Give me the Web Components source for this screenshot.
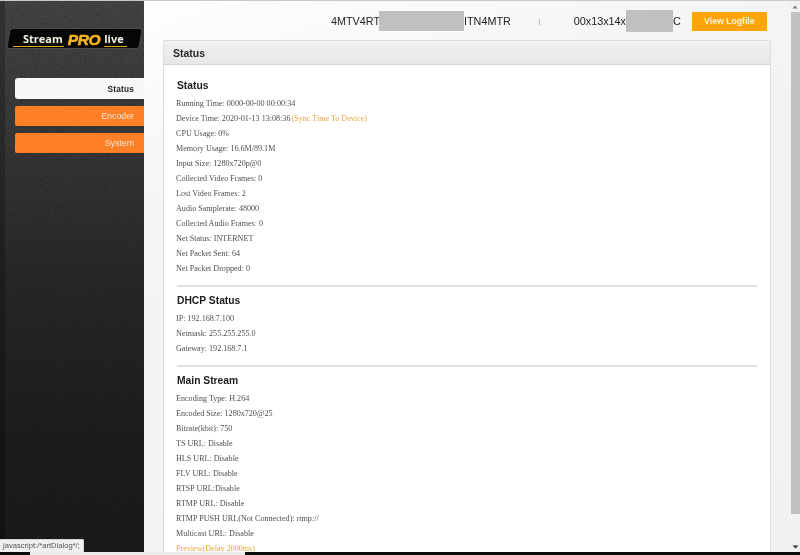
<!DOCTYPE html>
<html>
<head>
<meta charset="utf-8">
<title>Stream PRO live</title>
<style>
html, body { margin: 0; padding: 0; height: 555px; overflow: hidden; background: #000; }
</style>
</head>
<body>
<app-shell>
    <side-bar slot="side">
        <stream-logo></stream-logo>
        <nav-item active>Status</nav-item>
        <nav-item>Encoder</nav-item>
        <nav-item>System</nav-item>
    </side-bar>
    <top-bar slot="top"></top-bar>
    <status-card slot="main" title="Status">
        <info-section heading="Status">
            <info-line>Running Time: 0000-00-00 00:00:34</info-line>
            <info-line>Device Time: 2020-01-13 13:08:36<info-link style="margin-left:-1px">(Sync Time To Device)</info-link></info-line>
            <info-line>CPU Usage: 0%</info-line>
            <info-line>Memory Usage: 16.6M/89.1M</info-line>
            <info-line>Input Size: 1280x720p@0</info-line>
            <info-line>Collected Video Frames: 0</info-line>
            <info-line>Lost Video Frames: 2</info-line>
            <info-line>Audio Samplerate: 48000</info-line>
            <info-line>Collected Audio Frames: 0</info-line>
            <info-line>Net Status: INTERNET</info-line>
            <info-line>Net Packet Sent: 64</info-line>
            <info-line>Net Packet Dropped: 0</info-line>
        </info-section>
        <info-section heading="DHCP Status">
            <info-line>IP: 192.168.7.100</info-line>
            <info-line>Netmask: 255.255.255.0</info-line>
            <info-line>Gateway: 192.168.7.1</info-line>
        </info-section>
        <info-section heading="Main Stream" last>
            <info-line>Encoding Type: H.264</info-line>
            <info-line>Encoded Size: 1280x720@25</info-line>
            <info-line>Bitrate(kbit): 750</info-line>
            <info-line>TS URL: Disable</info-line>
            <info-line>HLS URL: Disable</info-line>
            <info-line>FLV URL: Disable</info-line>
            <info-line>RTSP URL:Disable</info-line>
            <info-line>RTMP URL: Disable</info-line>
            <info-line>RTMP PUSH URL(Not Connected): rtmp://</info-line>
            <info-line>Multicast URL: Disable</info-line>
            <info-line><info-link>Preview(Delay 2000ms)</info-link></info-line>
        </info-section>
    </status-card>
    <fake-scrollbar slot="scroll"></fake-scrollbar>
    <link-tip slot="tip">javascript:/*artDialog*/;</link-tip>
</app-shell>

<script>
class AppShell extends HTMLElement {
    constructor() {
        super();
        this.attachShadow({ mode: 'open' });
        this.shadowRoot.innerHTML = `
            <style>
                :host { display: block; position: relative; width: 800px; height: 555px; overflow: hidden; }
                /* opacity keeps the text greyscale like the reference */
                .frame { display: flex; height: 552px; border-top: 1px solid #c9c9c9; box-sizing: border-box; opacity: .999; }
                .content { flex: 1; min-width: 0; display: flex; flex-direction: column; overflow: hidden;
                    background: linear-gradient(160deg, #fefefe 0%, #f4f4f4 30%, #f1f1f1 100%); }
                .strip { height: 3px; background: #0c0c0c; padding-left: 30px; }
                .strip div { width: 215px; height: 3px; background: #ececec; }
            </style>
            <div class="frame">
                <slot name="side"></slot>
                <div class="content">
                    <slot name="top"></slot>
                    <slot name="main"></slot>
                </div>
                <slot name="scroll"></slot>
            </div>
            <div class="strip"><div></div></div>
            <slot name="tip"></slot>
        `;
    }
}

class SideBar extends HTMLElement {
    constructor() {
        super();
        this.attachShadow({ mode: 'open' });
        this.shadowRoot.innerHTML = `
            <style>
                :host {
                    display: flex; flex-direction: column; flex: none; width: 144px; box-sizing: border-box;
                    position: relative; overflow: hidden;
                    padding: 27px 0 0 15px; gap: 7px;
                    background: linear-gradient(180deg, #494949 0%, #3b3b3b 25%, #2b2b2b 50%, #1f1f1f 80%, #1c1c1c 100%);
                }
                /* grain over the gradient, the band on the left is just darker */
                .grain { position: absolute; left: 0; top: 0; width: 144px; height: 552px; opacity: .3; }
                .band { position: absolute; left: 0; top: 0; width: 5px; height: 100%; background: rgba(0,0,0,.22); }
                ::slotted(*) { z-index: 1; }
            </style>
            <svg class="grain" aria-hidden="true">
                <filter id="noise">
                    <feTurbulence type="fractalNoise" baseFrequency="0.9" numOctaves="2" seed="4"/>
                    <feColorMatrix values="0 0 0 0 0  0 0 0 0 0  0 0 0 0 0  0 0 0 1.6 -0.45"/>
                </filter>
                <rect width="144" height="552" filter="url(#noise)"/>
            </svg>
            <div class="band"></div>
            <slot></slot>
        `;
    }
}

class StreamLogo extends HTMLElement {
    constructor() {
        super();
        this.attachShadow({ mode: 'open' });
        this.shadowRoot.innerHTML = `
            <style>
                :host { display: flex; align-items: center; position: relative; width: 133px; height: 21px;
                    margin: 0 0 22px -7px; box-sizing: border-box; font-family: "Open Sans", "Liberation Sans", sans-serif;
                    color: #f4f1e6; font-size: 11px; font-weight: 700; line-height: 1; }
                .bg { position: absolute; inset: 0; transform: skewX(-10deg); background: #060606;
                    border: 1px solid #4a4a4a; border-radius: 3px; }
                .row { position: relative; display: flex; align-items: flex-end; padding-left: 5px; height: 17px; }
                .word { border-bottom: 1px solid #e6a825; padding: 0 3px 2px 0; }
                .word.first { padding-left: 10px; padding-right: 1px; }
                .pro { font-family: "Liberation Sans", sans-serif; font-style: italic; font-weight: 700; font-size: 15.5px;
                    color: #f6b21f; letter-spacing: -.4px; margin: 0 4px; -webkit-text-stroke: .6px #f6b21f; }
            </style>
            <div class="bg"></div>
            <div class="row">
                <span class="word first">Stream</span>
                <span class="pro">PRO</span>
                <span class="word">live</span>
            </div>
        `;
    }
}

class NavItem extends HTMLElement {
    constructor() {
        super();
        this.attachShadow({ mode: 'open' });
        this.shadowRoot.innerHTML = `
            <style>
                :host { display: flex; align-items: center; justify-content: flex-end; height: 20px; padding-right: 10px;
                    border-radius: 2px 0 0 2px; background: #fd7f26; color: #fbe6d6;
                    font: 400 8.8px "Liberation Sans", Arial, sans-serif; }
                :host([active]) { height: 21px; background: #f8f8f8; color: #222; font-weight: 700; font-size: 8.3px; border-radius: 3px 0 0 3px; letter-spacing: .2px; }
            </style>
            <slot></slot>
        `;
    }
}

class TopBar extends HTMLElement {
    constructor() {
        super();
        this.attachShadow({ mode: 'open' });
        this.shadowRoot.innerHTML = `
            <style>
                :host { display: flex; align-items: center; flex: none; height: 39px; padding-left: 187px;
                    box-sizing: border-box; font: 400 10.8px "Liberation Sans", Arial, sans-serif; color: #222; }
                .cover { display: inline-block; background: #c0c0c0; flex: none; }
                .sep { width: 1px; height: 6px; background: #bbb; margin: 3px 34px 0 28px; flex: none; }
                button { flex: none; width: 75px; height: 19px; margin: 1px 0 0 11px; border: 0; padding: 0; border-radius: 0;
                    background: #ffa40a; color: #fff3df; font: 700 8.7px "Liberation Sans", Arial, sans-serif; }
            </style>
            <span>4MTV4RT</span><span class="cover" style="width:85px;height:20px;margin-left:-1px"></span><span>ITN4MTR</span>
            <span class="sep"></span>
            <span>00x13x14x</span><span class="cover" style="width:47px;height:22px"></span><span>C</span>
            <button>View Logfile</button>
        `;
    }
}

class StatusCard extends HTMLElement {
    constructor() {
        super();
        this.attachShadow({ mode: 'open' });
        const title = this.getAttribute('title') || '';
        this.shadowRoot.innerHTML = `
            <style>
                :host { display: block; flex: none; box-sizing: border-box; width: 608px; margin-left: 19px; height: 520px;
                    background: #fff; border: 1px solid #dcdcdc; border-bottom: 0; border-radius: 2px 2px 0 0; }
                header { height: 24px; box-sizing: border-box; border-bottom: 1px solid #d6d6d6; padding-left: 9px;
                    display: flex; align-items: center; background: linear-gradient(180deg, #f1f1f1, #e7e7e7);
                    font: 700 10.5px "Liberation Sans", Arial, sans-serif; color: #2a2a2a; }
                .body { padding: 12px 13px 0; }
            </style>
            <header>${title}</header>
            <div class="body"><slot></slot></div>
        `;
    }
}

class InfoSection extends HTMLElement {
    constructor() {
        super();
        this.attachShadow({ mode: 'open' });
        const heading = this.getAttribute('heading') || '';
        this.shadowRoot.innerHTML = `
            <style>
                :host { display: block; border-bottom: 2px solid #e2e2e2; margin-bottom: 5px; padding-bottom: 9px; }
                :host([last]) { border-bottom: 0; }
                h3 { margin: 0 0 2px; padding-top: 1px; height: 16px; font: 700 10.3px/16px "Liberation Sans", Arial, sans-serif; color: #1c1c1c; }
            </style>
            <h3>${heading}</h3>
            <slot></slot>
        `;
    }
}

class InfoLine extends HTMLElement {
    constructor() {
        super();
        this.attachShadow({ mode: 'open' });
        this.shadowRoot.innerHTML = `
            <style>
                :host { display: block; height: 15px; margin-left: -1px; white-space: nowrap;
                    font: 400 8.1px/15px "Liberation Serif", "Times New Roman", serif; color: #4f4f4f; }
            </style>
            <slot></slot>
        `;
    }
}

class InfoLink extends HTMLElement {
    constructor() {
        super();
        this.attachShadow({ mode: 'open' });
        this.shadowRoot.innerHTML = `
            <style>:host { display: inline; color: #eda33b; }</style>
            <slot></slot>
        `;
    }
}

class FakeScrollbar extends HTMLElement {
    constructor() {
        super();
        this.attachShadow({ mode: 'open' });
        this.shadowRoot.innerHTML = `
            <style>
                :host { display: flex; flex-direction: column; align-items: center; flex: none; width: 10px;
                    background: #f1f1f1; box-sizing: border-box; }
                .arrow { height: 11px; display: flex; align-items: center; justify-content: center; flex: none; }
                .thumb { width: 9px; height: 502px; background: #c1c1c1; flex: none; }
                .end { margin-top: auto; }
            </style>
            <div class="arrow"><svg width="6" height="4" viewBox="0 0 6 4"><path d="M3 0.5L5.5 3.5H0.5Z" fill="#777"/></svg></div>
            <div class="thumb"></div>
            <div class="arrow end"><svg width="7" height="4" viewBox="0 0 7 4"><path d="M0.5 0.5H6.5L3.5 3.5Z" fill="#333"/></svg></div>
        `;
    }
}

class LinkTip extends HTMLElement {
    constructor() {
        super();
        this.attachShadow({ mode: 'open' });
        this.shadowRoot.innerHTML = `
            <style>
                :host { position: absolute; left: 0; top: 539px; width: 84px; height: 13px; box-sizing: border-box;
                    padding-left: 3px; background: #efefef; border: 1px solid #d6d6d6; border-width: 1px 1px 0 0; opacity: .999;
                    border-radius: 0 2px 0 0; font: 400 7.6px/12px "Liberation Sans", Arial, sans-serif; color: #555; white-space: nowrap; }
            </style>
            <slot></slot>
        `;
    }
}

customElements.define('app-shell', AppShell);
customElements.define('side-bar', SideBar);
customElements.define('stream-logo', StreamLogo);
customElements.define('nav-item', NavItem);
customElements.define('top-bar', TopBar);
customElements.define('status-card', StatusCard);
customElements.define('info-section', InfoSection);
customElements.define('info-line', InfoLine);
customElements.define('info-link', InfoLink);
customElements.define('fake-scrollbar', FakeScrollbar);
customElements.define('link-tip', LinkTip);
</script>
</body>
</html>
